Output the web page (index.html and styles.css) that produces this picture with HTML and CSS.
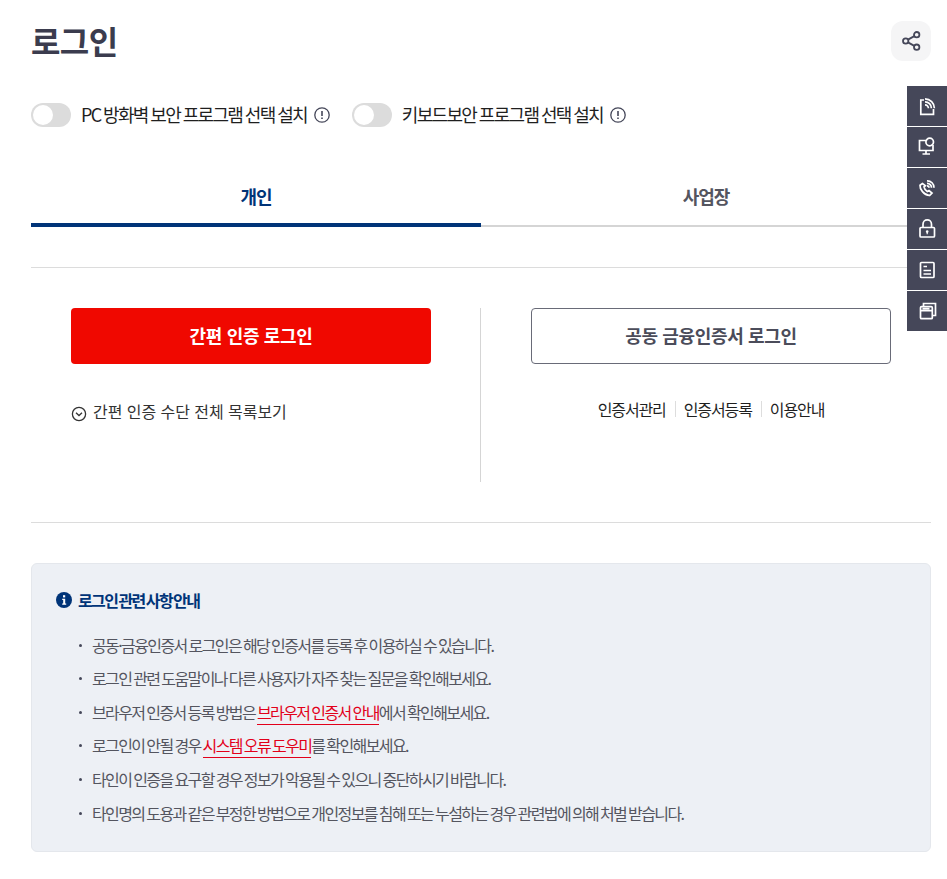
FILE: index.html
```html
<!DOCTYPE html>
<html lang="ko">
<head>
<meta charset="utf-8">
<title>로그인</title>
<link rel="stylesheet" href="styles.css">
</head>
<body>
<main class="page">
  <header class="head">
    <h1 class="title">로그인</h1>
    <button class="share" aria-label="공유">
      <svg width="20" height="20" viewBox="0 0 20 20" fill="none" stroke="#454759" stroke-width="1.8"><circle cx="4.700" cy="10" r="2.700"/><circle cx="15.700" cy="3.700" r="2.700"/><circle cx="15.700" cy="16.200" r="2.700"/><path d="M7 8.600l6.300-3.500M7 11.400l6.300 3.500"/></svg>
    </button>
  </header>
  <div class="options">
    <label class="opt"><span class="toggle"></span><span class="opt-text">PC 방화벽 보안 프로그램 선택 설치</span>
      <svg class="alert" width="16" height="16" viewBox="0 0 16 16" fill="none" stroke="#454759" stroke-width="1.300"><circle cx="8" cy="8" r="7.200"/><path d="M8 4v5" stroke-width="1.600"/><path d="M8 10.500v1.500" stroke-width="1.600"/></svg></label>
    <label class="opt"><span class="toggle"></span><span class="opt-text">키보드보안 프로그램 선택 설치</span>
      <svg class="alert" width="16" height="16" viewBox="0 0 16 16" fill="none" stroke="#454759" stroke-width="1.300"><circle cx="8" cy="8" r="7.200"/><path d="M8 4v5" stroke-width="1.600"/><path d="M8 10.500v1.500" stroke-width="1.600"/></svg></label>
  </div>
  <nav class="tabs">
    <a class="tab tab-on">개인</a>
    <a class="tab">사업장</a>
  </nav>
  <section class="login">
    <div class="col">
      <a class="btn btn-red">간편 인증 로그인</a>
      <a class="more">
        <svg class="more-icon" width="16" height="16" viewBox="0 0 16 16" fill="none" stroke="#333" stroke-width="1.300"><circle cx="8" cy="8" r="6.600"/><path d="M5 6.800l3 2.800 3-2.800"/></svg>
        간편 인증 수단 전체 목록보기</a>
    </div>
    <div class="col col-right">
      <a class="btn btn-line">공동 금융인증서 로그인</a>
      <ul class="links">
        <li>인증서관리</li>
        <li>인증서등록</li>
        <li>이용안내</li>
      </ul>
    </div>
  </section>
  <section class="notice">
    <h2 class="notice-title">
      <svg width="16" height="16" viewBox="0 0 16 16"><circle cx="8" cy="8" r="8" fill="#003478"/><rect x="7" y="3.200" width="2.200" height="2.200" fill="#fff"/><path d="M6.200 6.800h3v4.600h1v1.300H6.200v-1.300h1V8.100h-1z" fill="#fff"/></svg>
      로그인 관련 사항 안내</h2>
    <ul class="notes">
      <li>공동·금융인증서 로그인은 해당 인증서를 등록 후 이용하실 수 있습니다.</li>
      <li>로그인 관련 도움말이나 다른 사용자가 자주 찾는 질문을 확인해보세요.</li>
      <li>브라우저 인증서 등록 방법은 <a class="red">브라우저 인증서 안내</a>에서 확인해보세요.</li>
      <li>로그인이 안될 경우 <a class="red">시스템 오류 도우미</a>를 확인해보세요.</li>
      <li>타인이 인증을 요구할 경우 정보가 악용될 수 있으니 중단하시기 바랍니다.</li>
      <li>타인명의 도용과 같은 부정한 방법으로 개인정보를 침해 또는 누설하는 경우 관련법에 의해 처벌 받습니다.</li>
    </ul>
  </section>
</main>
<aside class="side">
  <a class="side-item"><svg width="20" height="20" viewBox="0 0 20 20" fill="none" stroke="#fff" stroke-width="1.700"><path d="M7 4H3.800v14.300H16.500V13"/><path d="M8 2.800a9.400 9.400 0 0 1 9.400 9.400M8 5.800a6.400 6.400 0 0 1 6.400 6.400M8 8.800a3.400 3.400 0 0 1 3.400 3.400"/></svg></a>
  <a class="side-item"><svg width="20" height="20" viewBox="0 0 20 20" fill="none" stroke="#fff" stroke-width="1.700"><path d="M9 3.500H2.500v10h13.500V8M9 13.500v3M5.500 17h7.500"/><circle cx="12.700" cy="5" r="3.800"/></svg></a>
  <a class="side-item"><svg width="20" height="20" viewBox="0 0 20 20" fill="none" stroke="#fff" stroke-width="1.700"><path d="M5.500 5.500L3 7.200c-.3 4 3.700 9.800 9.500 10.300l2.500-2.500-3-2.500-1.700 1C8.800 12.500 7.300 10.500 7 8.800l1.400-1z"/><path d="M10 2.800a6.700 6.700 0 0 1 7 7M10 5.300a4.300 4.300 0 0 1 4.500 4.500M10 7.800a2 2 0 0 1 2 2"/></svg></a>
  <a class="side-item"><svg width="20" height="20" viewBox="0 0 20 20" fill="none" stroke="#fff" stroke-width="1.700"><rect x="3" y="8.500" width="14.500" height="9.500" rx="1"/><path d="M6 8.500V5.200a4.200 4.200 0 0 1 8.500 0v3.300"/><circle cx="10.200" cy="12.600" r="1.300" fill="#fff" stroke="none"/><path d="M10.200 13v2.200" stroke-width="1.200"/></svg></a>
  <a class="side-item"><svg width="20" height="20" viewBox="0 0 20 20" fill="none" stroke="#fff" stroke-width="1.700"><rect x="3.500" y="2.500" width="13.500" height="15" rx="1"/><path d="M6.500 6.500h3.500M6.500 10.500h7.500M6.500 14h7.500"/></svg></a>
  <a class="side-item"><svg width="20" height="20" viewBox="0 0 20 20" fill="none" stroke="#fff" stroke-width="1.700"><rect x="3.500" y="5.700" width="11.800" height="12" rx="1"/><path d="M6.500 5.700V2.500H18.500V14.500H15.300M3.500 9.700h11.800M5.500 7.700h7"/></svg></a>
</aside>
</body>
</html>
```
FILE: styles.css
```css
* { box-sizing: border-box; }
html, body { margin: 0; padding: 0; background: #fff; }
body { font-family: "Noto Sans CJK KR", "Noto Sans", sans-serif; color: #1f1f1f; position: relative; height: 879px; overflow: hidden; }
a { color: inherit; text-decoration: none; }
ul { list-style: none; margin: 0; padding: 0; }
.page { width: 900px; margin-left: 31px; padding-top: 21px; }
.head { display: flex; justify-content: space-between; align-items: flex-start; height: 40px; }
.title { margin: 0; font-size: 32px; line-height: 38px; font-weight: 700; color: #3b3c4e; letter-spacing: -0.6px; }
.share { width: 40px; height: 40px; border: 0; border-radius: 12px; background: #f5f5f6; display: flex; align-items: center; justify-content: center; padding: 0; }
.options { display: flex; gap: 22px; margin-top: 42px; height: 24px; }
.opt { display: flex; align-items: center; }
.toggle { width: 40px; height: 24px; border-radius: 12px; background: #dcdcdc; position: relative; margin-right: 10px; }
.toggle::before { content: ""; position: absolute; left: 2px; top: 2px; width: 20px; height: 20px; border-radius: 50%; background: #fff; }
.opt-text { font-size: 18px; line-height: 22px; margin-bottom: 2px; letter-spacing: -1.7px; word-spacing: -0.7px; color: #1f1f1f; }
.alert { margin: 0 0 1px 7px; }
.tabs { display: flex; margin-top: 43px; height: 57px; }
.tab { flex: 1; text-align: center; font-size: 18px; line-height: 52px; font-weight: 700; letter-spacing: -1px; color: #54555f; border-bottom: 2px solid #d5d5d5; }
.tab-on { color: #003478; border-bottom: 4px solid #003478; }
.login { display: flex; margin-top: 40px; border-top: 1px solid #dcdcdc; border-bottom: 1px solid #dcdcdc; padding: 40px 0; height: 256px; }
.col { width: 450px; padding: 0 49px 0 40px; border-right: 1px solid #d5d5d5; }
.col-right { border-right: 0; padding: 0 40px 0 50px; }
.btn { display: block; height: 56px; line-height: 54px; text-align: center; border-radius: 4px; font-size: 18px; font-weight: 700; letter-spacing: -0.35px; }
.btn-red { background: #f00800; color: #fff; }
.btn-line { border: 1px solid #696b78; color: #4b4c5a; line-height: 52px; }
.more { display: flex; align-items: flex-start; gap: 6px; margin-top: 35px; font-size: 16px; line-height: 24px; letter-spacing: -0.05px; color: #333; }
.more-icon { margin-top: 7px; }
.links { display: flex; justify-content: center; margin-top: 33px; font-size: 16px; line-height: 24px; letter-spacing: -1.1px; color: #1f1f1f; }
.links li + li { margin-left: 9px; padding-left: 9px; background: linear-gradient(#ddd, #ddd) left center / 1px 16px no-repeat; }
.notice { margin-top: 40px; height: 289px; padding: 24px 24px 0; background: #edf0f5; border: 1px solid #e4e7ec; border-radius: 6px; }
.notice-title { margin: 0; display: flex; align-items: center; gap: 6px; font-size: 16px; line-height: 24px; font-weight: 700; letter-spacing: -1.6px; word-spacing: -1.8px; color: #003478; }
.notes { margin-top: 16.6px; padding-left: 36px; }
.notes li { position: relative; font-size: 16px; line-height: 33.6px; letter-spacing: -1.6px; word-spacing: -1px; color: #54555f; }
.notes li::before { content: ""; position: absolute; left: -13px; top: 15px; width: 3px; height: 3px; border-radius: 50%; background: #454759; }
.red { color: #e2001a; border-bottom: 1px solid #e2001a; }
.side { position: absolute; right: 0; top: 86px; width: 40px; display: flex; flex-direction: column; gap: 1px; }
.side-item { height: 40px; background: #454759; display: flex; align-items: center; justify-content: center; }
```
